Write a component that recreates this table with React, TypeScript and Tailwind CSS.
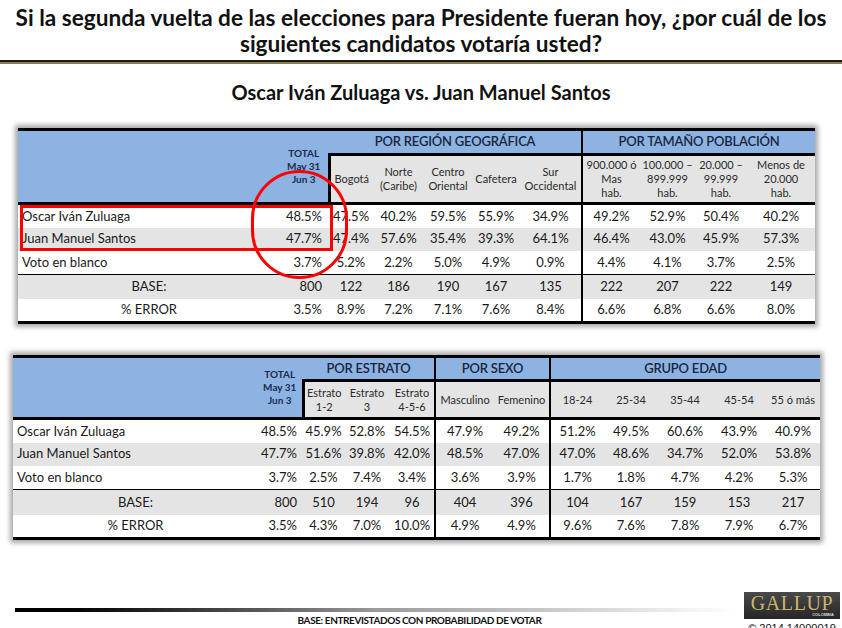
import React from 'react';

type Group = { label: string; span: number };
type Row = { label: string; values: string[]; shaded?: boolean; centered?: boolean; ruleBelow?: boolean };

const BLUE = 'bg-[#8db3e2]';
const SHADE = 'bg-[#e4e4e4]';

// Row heights are track heights in the collapsed border model (they include half of each border).
function SurveyTable({
  className,
  cols,
  groups,
  subheads,
  rows,
  groupRowClass,
  subRowClass,
  rowClasses,
  totalPad,
}: {
  className: string;
  cols: string[];
  groups: Group[];
  subheads: string[][];
  rows: Row[];
  groupRowClass: string;
  subRowClass: string;
  rowClasses: string[];
  totalPad: string;
}) {
  // column indexes (in the full table) where a new group starts, after the first one
  const starts = new Set<number>();
  let c = 2;
  groups.forEach((g, i) => {
    if (i > 0) starts.add(c);
    c += g.span;
  });

  return (
    <table className={`table-fixed border-collapse border-y-[3px] border-black text-[#1a1a1a] ${className}`}>
      <colgroup>
        {cols.map((w, i) => (
          <col key={i} className={w} />
        ))}
      </colgroup>
      <thead>
        <tr className={groupRowClass}>
          <th rowSpan={2} className={`${BLUE} border-b-[3px] border-black`} />
          <th
            rowSpan={2}
            className={`${BLUE} border-b-[3px] border-black text-center align-middle text-[10px] font-bold leading-[13px] text-[#1b2d4f]`}
          >
            TOTAL
            <br />
            May 31
            <br />
            Jun 3
          </th>
          {groups.map((g, i) => (
            <th
              key={g.label}
              colSpan={g.span}
              className={`${BLUE} border-b-[3px] border-black text-center text-[13px] font-semibold tracking-[-0.2px] text-[#1b2540] ${
                i > 0 ? 'border-l-2' : ''
              }`}
            >
              {g.label}
            </th>
          ))}
        </tr>
        <tr className={subRowClass}>
          {subheads.map((lines, j) => (
            <th
              key={j}
              className={`${SHADE} border-b-[3px] border-black text-center align-middle text-[11px] font-normal leading-[14px] text-[#2a2a2a] ${
                j === 0 ? 'border-l-[3px]' : starts.has(j + 2) ? 'border-l-2' : ''
              }`}
            >
              {lines.map((l, k) => (
                <div key={k} className="whitespace-nowrap">
                  {l}
                </div>
              ))}
            </th>
          ))}
        </tr>
      </thead>
      <tbody className="text-[13px]">
        {rows.map((r, i) => (
          <tr
            key={r.label}
            className={`${rowClasses[i]} ${r.shaded ? SHADE : 'bg-white'} ${r.ruleBelow ? 'border-b border-black' : ''}`}
          >
            <td className={`${r.centered ? 'text-center' : 'pl-[4px] text-left'} whitespace-nowrap`}>{r.label}</td>
            <td className={`text-right ${totalPad}`}>{r.values[0]}</td>
            {r.values.slice(1).map((v, j) => (
              <td key={j} className={`text-center ${starts.has(j + 2) ? 'border-l-2 border-black' : ''}`}>
                {v}
              </td>
            ))}
          </tr>
        ))}
      </tbody>
    </table>
  );
}

const regionRows: Row[] = [
  { label: 'Oscar Iván Zuluaga', values: ['48.5%', '47.5%', '40.2%', '59.5%', '55.9%', '34.9%', '49.2%', '52.9%', '50.4%', '40.2%'] },
  { label: 'Juan Manuel Santos', shaded: true, values: ['47.7%', '47.4%', '57.6%', '35.4%', '39.3%', '64.1%', '46.4%', '43.0%', '45.9%', '57.3%'] },
  { label: 'Voto en blanco', ruleBelow: true, values: ['3.7%', '5.2%', '2.2%', '5.0%', '4.9%', '0.9%', '4.4%', '4.1%', '3.7%', '2.5%'] },
  { label: 'BASE:', centered: true, shaded: true, values: ['800', '122', '186', '190', '167', '135', '222', '207', '222', '149'] },
  { label: '% ERROR', centered: true, values: ['3.5%', '8.9%', '7.2%', '7.1%', '7.6%', '8.4%', '6.6%', '6.8%', '6.6%', '8.0%'] },
];

const strataRows: Row[] = [
  { label: 'Oscar Iván Zuluaga', values: ['48.5%', '45.9%', '52.8%', '54.5%', '47.9%', '49.2%', '51.2%', '49.5%', '60.6%', '43.9%', '40.9%'] },
  { label: 'Juan Manuel Santos', shaded: true, values: ['47.7%', '51.6%', '39.8%', '42.0%', '48.5%', '47.0%', '47.0%', '48.6%', '34.7%', '52.0%', '53.8%'] },
  { label: 'Voto en blanco', ruleBelow: true, values: ['3.7%', '2.5%', '7.4%', '3.4%', '3.6%', '3.9%', '1.7%', '1.8%', '4.7%', '4.2%', '5.3%'] },
  { label: 'BASE:', centered: true, shaded: true, values: ['800', '510', '194', '96', '404', '396', '104', '167', '159', '153', '217'] },
  { label: '% ERROR', centered: true, values: ['3.5%', '4.3%', '7.0%', '10.0%', '4.9%', '4.9%', '9.6%', '7.6%', '7.8%', '7.9%', '6.7%'] },
];

function GallupLogo() {
  return (
    <div className="flex h-[27px] w-[96px] flex-col items-center bg-gradient-to-b from-[#4a4a4a] to-[#262626] pt-[2px]">
      <span className="font-['Liberation_Serif',serif] text-[20px] leading-[18px] tracking-[0.6px] text-[#c9b66e]">GALLUP</span>
      <span className="mt-[1px] self-end pr-[6px] font-['Liberation_Sans',sans-serif] text-[4px] font-bold leading-[4px] text-[#d8d8d8]">
        COLOMBIA
      </span>
    </div>
  );
}

export default function App() {
  return (
    <div className="relative h-[628px] w-[842px] overflow-hidden bg-white font-['Lato',sans-serif] text-black">
      {/* Question */}
      <h1 className="pt-[5px] text-center text-[22.6px] font-bold leading-[26px] text-[#111]">
        Si la segunda vuelta de las elecciones para Presidente fueran hoy, ¿por cuál de los
        <br />
        siguientes candidatos votaría usted?
      </h1>
      <div className="mt-[3px] h-[2px] bg-[#1a1a1a]" />
      <div className="h-[2px] bg-[#8a7b4e]" />

      <h2 className="mt-[16px] text-center text-[20px] font-bold leading-[24px] text-[#111]">
        Oscar Iván Zuluaga vs. Juan Manuel Santos
      </h2>

      {/* Region / population table */}
      <div className="relative ml-[18px] mt-[24px] w-[797px] shadow-[0_0_5px_3px_rgba(0,0,0,0.35)]">
        <SurveyTable
          className="w-[797px]"
          cols={['w-[262px]', 'w-[49px]', 'w-[44px]', 'w-[51px]', 'w-[48px]', 'w-[48px]', 'w-[62px]', 'w-[58px]', 'w-[55px]', 'w-[52px]', 'w-[68px]']}
          groups={[
            { label: 'POR REGIÓN GEOGRÁFICA', span: 5 },
            { label: 'POR TAMAÑO POBLACIÓN', span: 4 },
          ]}
          subheads={[
            ['Bogotá'],
            ['Norte', '(Caribe)'],
            ['Centro', 'Oriental'],
            ['Cafetera'],
            ['Sur', 'Occidental'],
            ['900.000 ó', 'Mas', 'hab.'],
            ['100.000 –', '899.999', 'hab.'],
            ['20.000 –', '99.999', 'hab.'],
            ['Menos de', '20.000', 'hab.'],
          ]}
          rows={regionRows}
          groupRowClass="h-[25px]"
          subRowClass="h-[49px]"
          rowClasses={['h-[24px]', 'h-[23px]', 'h-[24px]', 'h-[24px]', 'h-[24px]']}
          totalPad="pr-[7px]"
        />
        {/* hand-drawn highlight */}
        <div className="pointer-events-none absolute left-[2px] top-[77px] h-[46px] w-[313px] border-[3px] border-[#ff0000]" />
        <div className="pointer-events-none absolute left-[233px] top-[42px] h-[109px] w-[97px] rounded-full border-[3px] border-[#ff0000]" />
      </div>

      {/* Strata / sex / age table */}
      <div className="ml-[13px] mt-[31px] w-[807px] shadow-[0_0_5px_3px_rgba(0,0,0,0.35)]">
        <SurveyTable
          className="w-[807px]"
          cols={['w-[245px]', 'w-[45px]', 'w-[41px]', 'w-[46px]', 'w-[45px]', 'w-[59px]', 'w-[56px]', 'w-[54px]', 'w-[54px]', 'w-[54px]', 'w-[54px]', 'w-[54px]']}
          groups={[
            { label: 'POR ESTRATO', span: 3 },
            { label: 'POR SEXO', span: 2 },
            { label: 'GRUPO EDAD', span: 5 },
          ]}
          subheads={[
            ['Estrato', '1-2'],
            ['Estrato', '3'],
            ['Estrato', '4-5-6'],
            ['Masculino'],
            ['Femenino'],
            ['18-24'],
            ['25-34'],
            ['35-44'],
            ['45-54'],
            ['55 ó más'],
          ]}
          rows={strataRows}
          groupRowClass="h-[24px]"
          subRowClass="h-[38px]"
          rowClasses={['h-[24px]', 'h-[23px]', 'h-[24px]', 'h-[25px]', 'h-[24px]']}
          totalPad="pr-[6px]"
        />
      </div>

      {/* Footer */}
      <div className="mt-[52px] flex items-start">
        <div className="flex-1 pl-[15px] pt-[16px]">
          <div className="h-[4px] w-[720px] bg-gradient-to-r from-black via-[#9a9a9a] to-white" />
          <p className="mt-[2px] pl-[80px] text-center text-[10px] font-bold leading-[12px] tracking-[-0.4px] text-[#111]">
            BASE: ENTREVISTADOS CON PROBABILIDAD DE VOTAR
          </p>
        </div>
        <div className="mr-[2px] flex flex-col items-center">
          <GallupLogo />
          <span className="mt-[3px] font-['Liberation_Sans',sans-serif] text-[11px] leading-[12px] text-[#111]">© 2014 14000019</span>
        </div>
      </div>
    </div>
  );
}
